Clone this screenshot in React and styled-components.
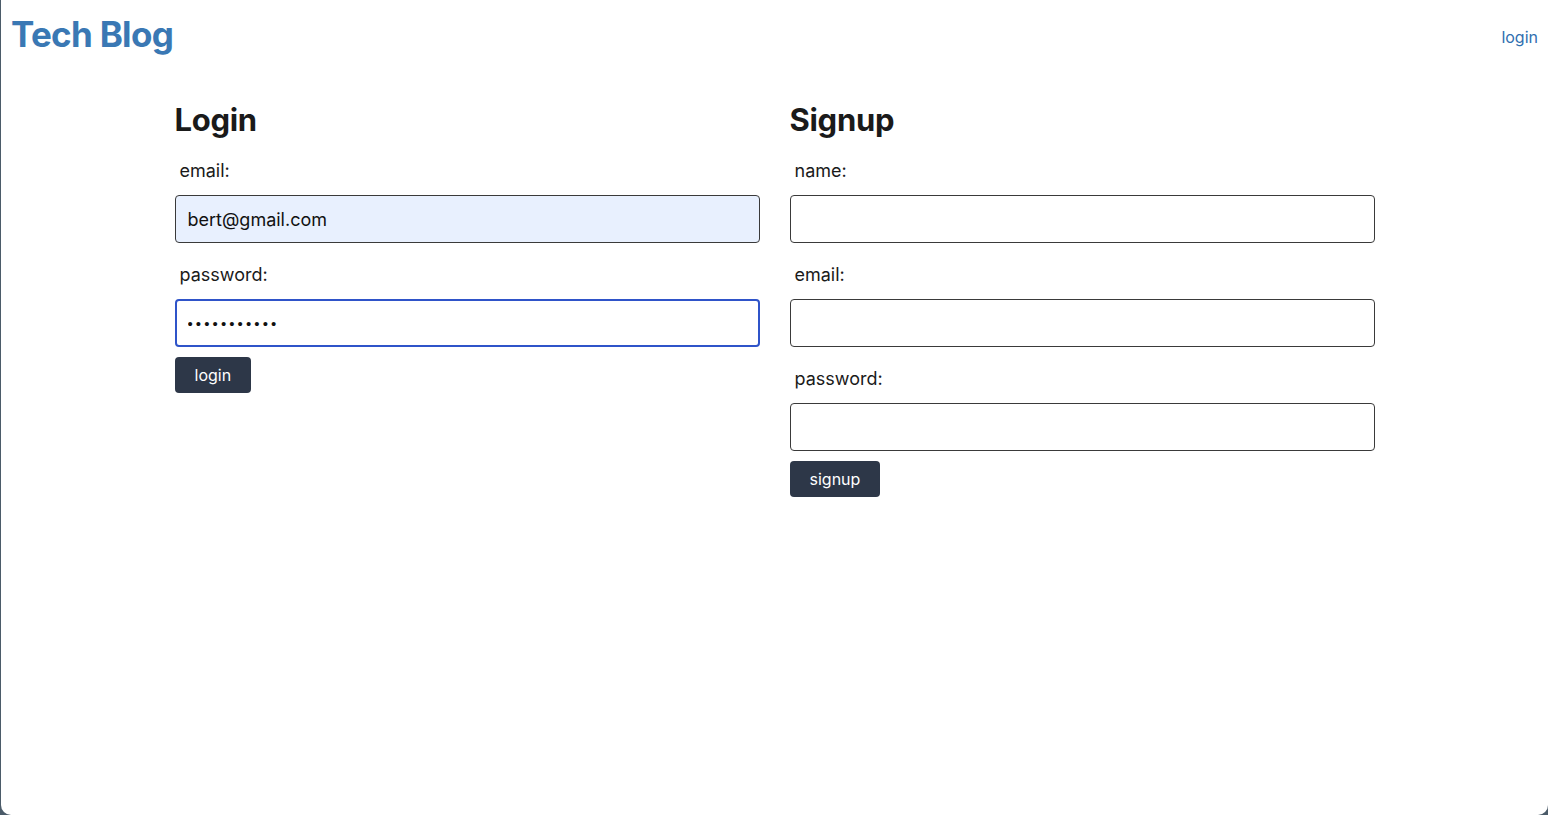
import React from 'react';
import styled, { createGlobalStyle } from 'styled-components';

const GlobalStyle = createGlobalStyle`
  html, body {
    margin: 0;
    padding: 0;
    background: #4b5b69;
  }
  body {
    font-family: Inter, "Noto Sans", "Liberation Sans", sans-serif;
    color: #1a1a1a;
  }
`;

const Frame = styled.div`
  min-height: 815px;
  margin-left: 1px;
  background: #fff;
  border-radius: 0 0 10px 10px;
  box-sizing: border-box;
`;

const Header = styled.header`
  display: flex;
  justify-content: space-between;
  align-items: center;
  padding: 13px 10px 0 10px;
`;

const Brand = styled.a`
  font-size: 35px;
  font-weight: 700;
  color: #3a78b4;
  text-decoration: none;
  letter-spacing: -0.7px;
`;

const NavLink = styled.a`
  font-size: 16px;
  color: #2f6fb0;
  text-decoration: none;
  padding-top: 6px;
`;

const Main = styled.main`
  width: 1200px;
  margin: 45px auto 0;
  display: grid;
  grid-template-columns: 1fr 1fr;
  column-gap: 30px;
`;

const Form = styled.form`
  display: flex;
  flex-direction: column;
`;

const Title = styled.h2`
  font-size: 31px;
  font-weight: 700;
  margin: 0 0 20px;
  line-height: 40px;
  letter-spacing: -0.3px;
`;

const Label = styled.label`
  font-size: 18px;
  padding-left: 5px;
  line-height: 22px;
  margin-bottom: 13px;
`;

const Input = styled.input`
  height: 48px;
  box-sizing: border-box;
  border: ${({ $focused }) => ($focused ? '2px solid #2f54c9' : '1px solid #3a3a3a')};
  border-radius: 4px;
  background: ${({ $filled }) => ($filled ? '#e8f0fe' : '#fff')};
  font-family: ${({ $pw }) => ($pw ? '"Liberation Sans", sans-serif' : 'inherit')};
  font-size: ${({ $pw }) => ($pw ? '15px' : '18px')};
  padding: 0 ${({ $focused }) => ($focused ? '11px' : '12px')};
  color: #111;
  outline: none;
  margin-bottom: ${({ $last }) => ($last ? '10px' : '21px')};
  letter-spacing: ${({ $pw }) => ($pw ? '3.1px' : '0')};
`;

const Button = styled.button`
  align-self: flex-start;
  height: 36px;
  padding: 0 20px;
  background: #2d3748;
  color: #fff;
  border: none;
  border-radius: 4px;
  font-family: inherit;
  font-size: 16px;
  cursor: pointer;
`;

export default function App() {
  return (
    <>
      <GlobalStyle />
      <Frame>
        <Header>
          <Brand href="#">Tech Blog</Brand>
          <NavLink href="#">login</NavLink>
        </Header>
        <Main>
          <Form onSubmit={(e) => e.preventDefault()}>
            <Title>Login</Title>
            <Label>email:</Label>
            <Input $filled defaultValue="bert@gmail.com" />
            <Label>password:</Label>
            <Input $focused $last $pw type="password" defaultValue="password123" />
            <Button>login</Button>
          </Form>
          <Form onSubmit={(e) => e.preventDefault()}>
            <Title>Signup</Title>
            <Label>name:</Label>
            <Input />
            <Label>email:</Label>
            <Input />
            <Label>password:</Label>
            <Input $last type="password" />
            <Button>signup</Button>
          </Form>
        </Main>
      </Frame>
    </>
  );
}
